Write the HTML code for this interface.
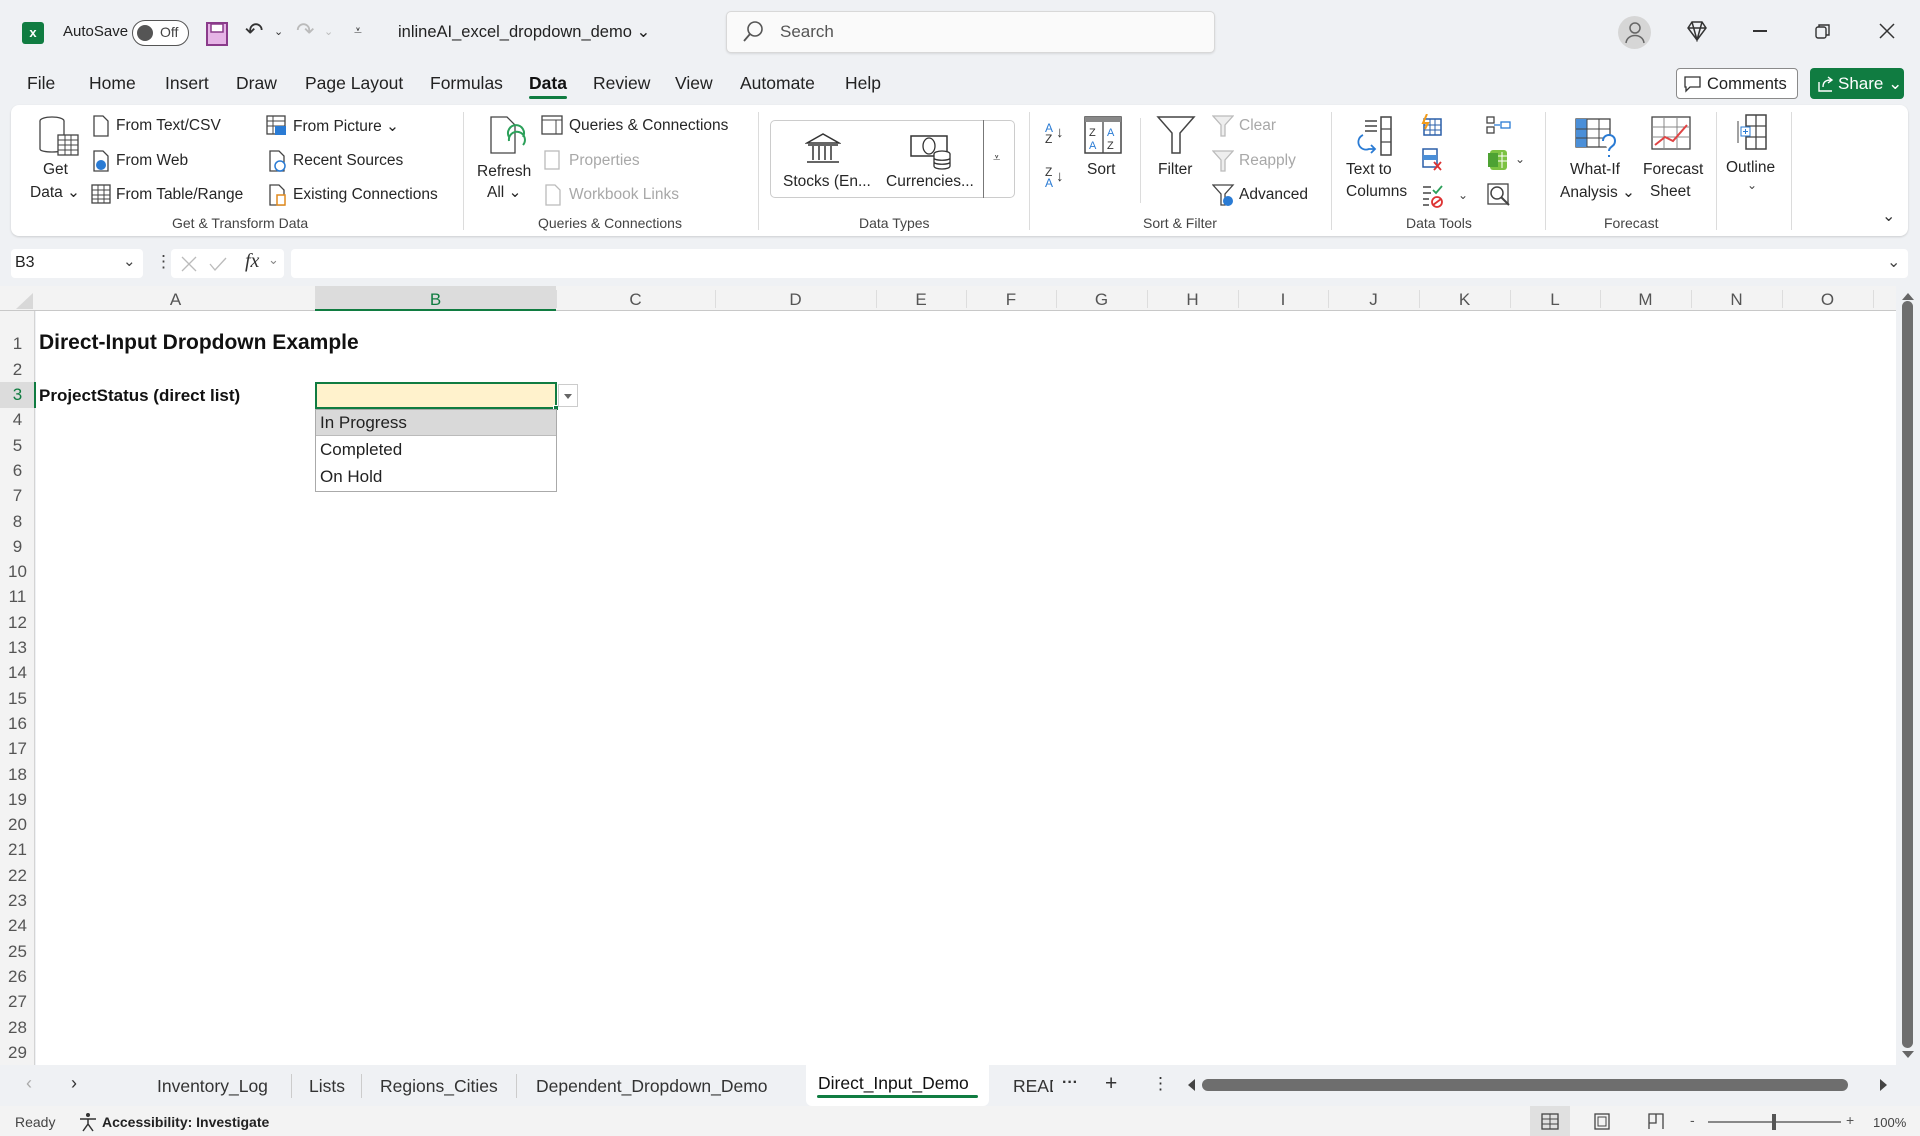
<!DOCTYPE html>
<html><head><meta charset="utf-8">
<style>
*{margin:0;padding:0;box-sizing:border-box}
body{width:1920px;height:1136px;overflow:hidden;background:#eff1f4;font-family:"Liberation Sans",sans-serif;color:#222;position:relative}
.a{position:absolute;white-space:nowrap}
.t{font-size:15.5px;color:#262626}
.g{color:#a8a8a8}
.lbl{font-size:14px;color:#444}
.sep{position:absolute;width:1px;background:#dcdcdc;top:112px;height:118px}
.menu{font-size:17.5px;top:73px;color:#222}
.ch{font-size:17px;color:#555;top:290px;text-align:center}
.rn{font-size:17px;color:#555;left:0;width:35px;text-align:center}
svg{position:absolute}
</style></head><body>

<!-- title bar -->
<div class="a" style="left:22px;top:22px;width:22px;height:22px;background:#107c41;border-radius:3px;color:#fff;font-size:13px;font-weight:bold;text-align:center;line-height:22px">x</div>
<div class="a" style="left:63px;top:23px;font-size:15px">AutoSave</div>
<div class="a" style="left:132px;top:20px;width:57px;height:26px;border:1.5px solid #555;border-radius:13px;background:#fff"></div>
<div class="a" style="left:137px;top:25px;width:16px;height:16px;border-radius:8px;background:#555"></div>
<div class="a" style="left:160px;top:24px;font-size:14px;color:#444">Off</div>
<svg style="left:206px;top:22px" width="22" height="24"><rect x="1" y="1" width="20" height="22" fill="#e6b4e6" stroke="#8a3b8a" stroke-width="2"/><rect x="5" y="2" width="12" height="8" fill="#fff" stroke="#8a3b8a" stroke-width="1.5"/></svg>
<div class="a" style="left:245px;top:18px;font-size:22px;color:#333">↶</div>
<div class="a" style="left:274px;top:25px;font-size:11px;color:#333">⌄</div>
<div class="a" style="left:296px;top:18px;font-size:22px;color:#bbb">↷</div>
<div class="a" style="left:324px;top:25px;font-size:11px;color:#bbb">⌄</div>
<div class="a" style="left:354px;top:22px;font-size:14px;color:#333">⩡</div>
<div class="a" style="left:398px;top:22px;font-size:16.5px;color:#222">inlineAI_excel_dropdown_demo ⌄</div>
<div class="a" style="left:726px;top:11px;width:489px;height:42px;background:#fafafa;border:1px solid #d8d8d8;border-radius:5px;box-shadow:0 1px 2px rgba(0,0,0,.1)"></div>
<svg style="left:742px;top:20px" width="22" height="24"><circle cx="13" cy="9" r="7" fill="none" stroke="#555" stroke-width="1.6"/><path d="M8 14 L2 21" stroke="#555" stroke-width="1.8"/></svg>
<div class="a" style="left:780px;top:22px;font-size:17px;color:#555">Search</div>
<div class="a" style="left:1618px;top:16px;width:33px;height:33px;border-radius:50%;background:#d6d6d6"></div>
<svg style="left:1624px;top:20px" width="22" height="26"><circle cx="11" cy="8" r="5" fill="none" stroke="#666" stroke-width="1.5"/><path d="M2 23 C3 13 19 13 20 23" fill="none" stroke="#666" stroke-width="1.5"/></svg>
<svg style="left:1686px;top:20px" width="22" height="22"><path d="M2 8 L6 2 H16 L20 8 L11 20 Z M2 8 H20 M6 2 L11 20 L16 2" fill="none" stroke="#333" stroke-width="1.5"/></svg>
<div class="a" style="left:1753px;top:30px;width:14px;height:1.5px;background:#333"></div>
<svg style="left:1815px;top:23px" width="16" height="16"><rect x="1" y="4" width="10" height="11" rx="2" fill="none" stroke="#333" stroke-width="1.4"/><path d="M4 4 V2 H14 V12 H11" fill="none" stroke="#333" stroke-width="1.4"/></svg>
<svg style="left:1879px;top:23px" width="16" height="16"><path d="M1 1 L15 15 M15 1 L1 15" stroke="#333" stroke-width="1.5"/></svg>

<!-- menu -->
<div class="a menu" style="left:27px">File</div>
<div class="a menu" style="left:89px">Home</div>
<div class="a menu" style="left:165px">Insert</div>
<div class="a menu" style="left:236px">Draw</div>
<div class="a menu" style="left:305px">Page Layout</div>
<div class="a menu" style="left:430px">Formulas</div>
<div class="a menu" style="left:529px;font-weight:bold;color:#111">Data</div>
<div class="a" style="left:529px;top:96px;width:38px;height:3px;background:#107c41;border-radius:2px"></div>
<div class="a menu" style="left:593px">Review</div>
<div class="a menu" style="left:675px">View</div>
<div class="a menu" style="left:740px">Automate</div>
<div class="a menu" style="left:845px">Help</div>
<div class="a" style="left:1676px;top:68px;width:122px;height:31px;border:1px solid #8a8a8a;border-radius:4px;background:#fff;font-size:16.5px;padding:6px 0 0 30px">Comments</div>
<svg style="left:1684px;top:76px" width="18" height="18"><path d="M1 1 H16 V11 H6 L2 15 V11 H1 Z" fill="none" stroke="#333" stroke-width="1.3"/></svg>
<div class="a" style="left:1810px;top:68px;width:94px;height:31px;border-radius:4px;background:#107c41;color:#fff;font-size:17px;padding:6px 0 0 28px">Share ⌄</div>
<svg style="left:1817px;top:75px" width="18" height="18"><path d="M2 7 V16 H15 M6 12 C6 6 10 5 14 5 M11 2 L15 5 L11 8" fill="none" stroke="#fff" stroke-width="1.4"/></svg>

<!-- ribbon -->
<div class="a" style="left:11px;top:105px;width:1897px;height:131px;background:#fff;border-radius:8px;box-shadow:0 1px 2px rgba(0,0,0,.15)"></div>
<svg style="left:38px;top:115px" width="42" height="42"><ellipse cx="14" cy="6" rx="12" ry="4" fill="#fff" stroke="#444" stroke-width="1.3"/><path d="M2 6 V34 C2 38 26 38 26 34 V6" fill="#fff" stroke="#444" stroke-width="1.3"/><rect x="20" y="20" width="20" height="20" fill="#fff" stroke="#444" stroke-width="1.3"/><path d="M20 25 H40 M20 30 H40 M20 35 H40 M27 20 V40 M33 20 V40" stroke="#444"/></svg>
<div class="a t" style="left:43px;top:161px">Get</div>
<div class="a t" style="left:30px;top:183px">Data ⌄</div>
<svg style="left:92px;top:115px" width="18" height="22"><path d="M2 1 H11 L16 6 V21 H2 Z" fill="#fff" stroke="#444" stroke-width="1.3"/></svg>
<div class="a t" style="left:116px;top:117px">From Text/CSV</div>
<svg style="left:92px;top:150px" width="18" height="22"><path d="M2 1 H11 L16 6 V21 H2 Z" fill="#fff" stroke="#444" stroke-width="1.3"/><circle cx="9" cy="15" r="5" fill="#2a7bd4"/></svg>
<div class="a t" style="left:116px;top:152px">From Web</div>
<svg style="left:91px;top:184px" width="20" height="20"><rect x="1" y="1" width="18" height="18" fill="#fff" stroke="#444" stroke-width="1.3"/><path d="M1 6 H19 M1 11 H19 M1 15 H19 M7 1 V19 M13 1 V19" stroke="#444"/></svg>
<div class="a t" style="left:116px;top:186px">From Table/Range</div>
<svg style="left:266px;top:115px" width="22" height="22"><rect x="1" y="1" width="18" height="18" fill="#fff" stroke="#444" stroke-width="1.3"/><path d="M1 6 H19 M1 11 H19 M7 1 V19" stroke="#444"/><rect x="9" y="11" width="11" height="9" fill="#2a7bd4"/></svg>
<div class="a t" style="left:293px;top:117px">From Picture ⌄</div>
<svg style="left:268px;top:150px" width="20" height="22"><path d="M2 1 H11 L16 6 V21 H2 Z" fill="#fff" stroke="#444" stroke-width="1.3"/><circle cx="12" cy="16" r="5" fill="#fff" stroke="#2a7bd4" stroke-width="1.5"/></svg>
<div class="a t" style="left:293px;top:152px">Recent Sources</div>
<svg style="left:268px;top:184px" width="20" height="22"><path d="M2 1 H11 L16 6 V21 H2 Z" fill="#fff" stroke="#444" stroke-width="1.3"/><rect x="9" y="11" width="8" height="10" fill="#fff" stroke="#e08a1e" stroke-width="1.5"/></svg>
<div class="a t" style="left:293px;top:186px">Existing Connections</div>
<div class="a lbl" style="left:172px;top:215px">Get &amp; Transform Data</div>
<div class="sep" style="left:463px"></div>
<svg style="left:487px;top:115px" width="44" height="44"><path d="M4 2 H20 L28 10 V38 H4 Z" fill="#fff" stroke="#444" stroke-width="1.3"/><path d="M22 26 A8 8 0 1 1 36 30 M36 22 A8 8 0 1 0 22 22" fill="none" stroke="#2ca05a" stroke-width="2"/></svg>
<div class="a t" style="left:477px;top:163px">Refresh</div>
<div class="a t" style="left:487px;top:183px">All ⌄</div>
<svg style="left:541px;top:115px" width="22" height="20"><rect x="1" y="1" width="20" height="18" fill="#fff" stroke="#444" stroke-width="1.3"/><path d="M1 5 H21 M15 5 V19" stroke="#444"/></svg>
<div class="a t" style="left:569px;top:117px">Queries &amp; Connections</div>
<svg style="left:544px;top:150px" width="16" height="20"><rect x="1" y="1" width="14" height="18" fill="#fff" stroke="#bbb" stroke-width="1.3"/></svg>
<div class="a t g" style="left:569px;top:152px">Properties</div>
<svg style="left:544px;top:184px" width="18" height="22"><path d="M2 1 H11 L16 6 V21 H2 Z" fill="#fff" stroke="#bbb" stroke-width="1.3"/></svg>
<div class="a t g" style="left:569px;top:186px">Workbook Links</div>
<div class="a lbl" style="left:538px;top:215px">Queries &amp; Connections</div>
<div class="sep" style="left:758px"></div>
<div class="a" style="left:770px;top:120px;width:245px;height:78px;border:1px solid #ccc;border-radius:5px"></div>
<div class="a" style="left:983px;top:120px;width:1px;height:78px;background:#777"></div>
<div class="a" style="left:993px;top:150px;font-size:13px;color:#444">⩡</div>
<svg style="left:805px;top:132px" width="36" height="34"><path d="M2 11 L18 2 L34 11 Z" fill="#fff" stroke="#333" stroke-width="1.5"/><path d="M3 13 H33 M8 14 V28 M14 14 V28 M20 14 V28 M26 14 V28 M2 30 H34" stroke="#333" stroke-width="1.5"/></svg>
<div class="a t" style="left:783px;top:173px">Stocks (En...</div>
<svg style="left:910px;top:132px" width="42" height="38"><rect x="1" y="4" width="36" height="20" fill="#fff" stroke="#333" stroke-width="1.5"/><ellipse cx="19" cy="14" rx="6" ry="8" fill="none" stroke="#333" stroke-width="1.3"/><ellipse cx="32" cy="22" rx="8" ry="3" fill="#fff" stroke="#333" stroke-width="1.3"/><path d="M24 22 V34 C24 38 40 38 40 34 V22 M24 26 C24 29 40 29 40 26 M24 30 C24 33 40 33 40 30" fill="#fff" stroke="#333" stroke-width="1.3"/></svg>
<div class="a t" style="left:886px;top:173px">Currencies...</div>
<div class="a lbl" style="left:859px;top:215px">Data Types</div>
<div class="sep" style="left:1029px"></div>
<div class="a" style="left:1045px;top:123px;font-size:12px;line-height:11px;color:#2a7bd4">A<br><span style="color:#333">Z</span></div>
<div class="a" style="left:1056px;top:124px;font-size:15px;color:#333">↓</div>
<div class="a" style="left:1045px;top:167px;font-size:12px;line-height:11px;color:#333">Z<br><span style="color:#2a7bd4">A</span></div>
<div class="a" style="left:1056px;top:168px;font-size:15px;color:#333">↓</div>
<svg style="left:1084px;top:116px" width="38" height="38"><rect x="1" y="1" width="36" height="36" fill="#fff" stroke="#444" stroke-width="1.5"/><rect x="1" y="1" width="36" height="5" fill="#888"/><path d="M19 6 V37" stroke="#444" stroke-width="1.3"/><text x="5" y="20" font-size="11" fill="#333" font-family="Liberation Sans">Z</text><text x="5" y="33" font-size="11" fill="#2a7bd4" font-family="Liberation Sans">A</text><text x="23" y="20" font-size="11" fill="#2a7bd4" font-family="Liberation Sans">A</text><text x="23" y="33" font-size="11" fill="#333" font-family="Liberation Sans">Z</text></svg>
<div class="a t" style="left:1087px;top:161px">Sort</div>
<div class="sep" style="left:1140px;top:118px;height:85px"></div>
<svg style="left:1156px;top:115px" width="40" height="40"><path d="M2 2 H38 L24 18 V38 H16 V18 Z" fill="#fff" stroke="#444" stroke-width="1.5"/></svg>
<div class="a t" style="left:1158px;top:161px">Filter</div>
<svg style="left:1212px;top:115px" width="22" height="22"><path d="M1 1 H21 L13 10 V21 H9 V10 Z" fill="#eee" stroke="#bbb" stroke-width="1.3"/></svg>
<div class="a t g" style="left:1239px;top:117px">Clear</div>
<svg style="left:1212px;top:150px" width="22" height="22"><path d="M1 1 H21 L13 10 V21 H9 V10 Z" fill="#eee" stroke="#bbb" stroke-width="1.3"/></svg>
<div class="a t g" style="left:1239px;top:152px">Reapply</div>
<svg style="left:1212px;top:184px" width="24" height="24"><path d="M1 1 H21 L13 10 V21 H9 V10 Z" fill="#fff" stroke="#444" stroke-width="1.3"/><circle cx="16" cy="17" r="5" fill="#2a7bd4"/></svg>
<div class="a t" style="left:1239px;top:186px">Advanced</div>
<div class="a lbl" style="left:1143px;top:215px">Sort &amp; Filter</div>
<div class="sep" style="left:1331px"></div>
<svg style="left:1355px;top:115px" width="44" height="46"><path d="M10 6 H22 M10 11 H22 M10 16 H22" stroke="#444" stroke-width="1.5"/><rect x="26" y="2" width="10" height="38" fill="#fff" stroke="#444" stroke-width="1.5"/><path d="M26 14 H36 M26 27 H36" stroke="#444" stroke-width="1.3"/><path d="M8 20 A7 7 0 0 0 14 34 L20 34 M16 30 L20 34 L16 38" fill="none" stroke="#2a7bd4" stroke-width="1.8"/></svg>
<div class="a t" style="left:1346px;top:161px">Text to</div>
<div class="a t" style="left:1346px;top:183px">Columns</div>
<svg style="left:1421px;top:114px" width="22" height="22"><rect x="3" y="5" width="17" height="16" fill="#fff" stroke="#2a5fa8" stroke-width="1.5"/><path d="M3 11 H20 M3 16 H20 M9 5 V21 M14 5 V21" stroke="#2a5fa8"/><path d="M6 0 L2 9 H7 L4 15" stroke="#f29b1a" stroke-width="2" fill="none"/></svg>
<svg style="left:1421px;top:148px" width="22" height="24"><rect x="2" y="1" width="14" height="18" fill="#fff" stroke="#2a5fa8" stroke-width="1.5"/><rect x="2" y="7" width="14" height="5" fill="#4b8fd8"/><path d="M13 14 L20 22 M20 14 L13 22" stroke="#d33" stroke-width="1.8"/></svg>
<svg style="left:1421px;top:184px" width="24" height="24"><path d="M2 3 H10 M2 9 H10 M2 15 H8 M2 21 H8" stroke="#444" stroke-width="1.5"/><path d="M12 6 L15 9 L21 2" stroke="#2ca05a" stroke-width="1.8" fill="none"/><circle cx="16" cy="18" r="5" fill="none" stroke="#d33" stroke-width="1.8"/><path d="M12 21 L20 15" stroke="#d33" stroke-width="1.8"/></svg>
<div class="a" style="left:1458px;top:188px;font-size:12px;color:#444">⌄</div>
<svg style="left:1486px;top:115px" width="26" height="20"><rect x="1" y="2" width="7" height="6" fill="#fff" stroke="#444" stroke-width="1.3"/><rect x="1" y="12" width="7" height="6" fill="#fff" stroke="#444" stroke-width="1.3"/><rect x="15" y="7" width="9" height="6" fill="#fff" stroke="#2a7bd4" stroke-width="1.3"/><path d="M8 10 H14" stroke="#2a7bd4" stroke-width="1.3"/></svg>
<svg style="left:1487px;top:148px" width="22" height="24"><rect x="3" y="2" width="17" height="20" rx="3" fill="#7cc242"/><rect x="1" y="5" width="10" height="14" fill="#4da233"/><path d="M11 8 H20 M11 13 H20 M15 4 V20" stroke="#fff"/></svg>
<div class="a" style="left:1515px;top:152px;font-size:12px;color:#444">⌄</div>
<svg style="left:1487px;top:183px" width="24" height="24"><rect x="1" y="1" width="20" height="20" fill="#fff" stroke="#444" stroke-width="1.3"/><circle cx="10" cy="10" r="6" fill="none" stroke="#444" stroke-width="1.5"/><path d="M14 14 L22 22" stroke="#444" stroke-width="2"/></svg>
<div class="a lbl" style="left:1406px;top:215px">Data Tools</div>
<div class="sep" style="left:1545px"></div>
<svg style="left:1575px;top:117px" width="44" height="42"><rect x="1" y="2" width="34" height="28" fill="#fff" stroke="#444" stroke-width="1.3"/><rect x="1" y="2" width="11" height="28" fill="#4b8fd8"/><path d="M1 12 H35 M1 21 H35 M12 2 V30 M24 2 V30" stroke="#444"/><path d="M28 24 C28 16 40 16 40 24 C40 30 34 29 34 34 M34 38 V40" fill="#fff" stroke="#2a7bd4" stroke-width="2"/></svg>
<div class="a t" style="left:1570px;top:161px">What-If</div>
<div class="a t" style="left:1560px;top:183px">Analysis ⌄</div>
<svg style="left:1651px;top:115px" width="42" height="42"><rect x="1" y="2" width="38" height="32" fill="#fff" stroke="#444" stroke-width="1.3"/><path d="M1 12 H39 M1 22 H39 M13 2 V34 M26 2 V34" stroke="#888"/><path d="M4 30 L14 22 L22 26 L36 10" fill="none" stroke="#e04444" stroke-width="2"/></svg>
<div class="a t" style="left:1643px;top:161px">Forecast</div>
<div class="a t" style="left:1650px;top:183px">Sheet</div>
<div class="a lbl" style="left:1604px;top:215px">Forecast</div>
<div class="sep" style="left:1716px"></div>
<svg style="left:1736px;top:113px" width="34" height="38"><rect x="10" y="2" width="20" height="34" fill="#fff" stroke="#444" stroke-width="1.5"/><path d="M10 13 H30 M10 24 H30 M20 2 V36" stroke="#444" stroke-width="1.3"/><path d="M2 8 V30" stroke="#444"/><rect x="5" y="14" width="9" height="9" fill="#fff" stroke="#2a7bd4"/><path d="M9.5 16 V21 M7 18.5 H12" stroke="#2a7bd4"/></svg>
<div class="a t" style="left:1726px;top:159px">Outline</div>
<div class="a" style="left:1747px;top:178px;font-size:12px;color:#444">⌄</div>
<div class="sep" style="left:1791px"></div>
<div class="a" style="left:1882px;top:206px;font-size:16px;color:#333">⌄</div>

<!-- formula bar -->
<div class="a" style="left:11px;top:249px;width:132px;height:29px;background:#fff;border-radius:4px;font-size:16px;padding:5px 0 0 4px">B3</div>
<div class="a" style="left:123px;top:252px;font-size:15px;color:#444">⌄</div>
<div class="a" style="left:155px;top:252px;font-size:17px;color:#444">⋮</div>
<div class="a" style="left:171px;top:249px;width:113px;height:29px;background:#fff;border-radius:4px"></div>
<svg style="left:180px;top:256px" width="18" height="16"><path d="M2 1 L16 15 M16 1 L2 15" stroke="#bbb" stroke-width="1.3"/></svg>
<svg style="left:208px;top:256px" width="20" height="16"><path d="M2 8 L7 14 L18 2" fill="none" stroke="#bbb" stroke-width="1.3"/></svg>
<div class="a" style="left:245px;top:250px;font-size:20px;font-style:italic;font-family:'Liberation Serif',serif;color:#333">fx</div>
<div class="a" style="left:268px;top:252px;font-size:13px;color:#888">⌄</div>
<div class="a" style="left:291px;top:249px;width:1617px;height:29px;background:#fff;border-radius:4px"></div>
<div class="a" style="left:1887px;top:252px;font-size:16px;color:#444">⌄</div>

<!-- grid area -->
<div class="a" style="left:0;top:286px;width:1896px;height:25px;background:#f3f3f3;border-bottom:1px solid #c8c8c8"></div>
<div class="a" style="left:0;top:311px;width:35px;height:754px;background:#f3f3f3;border-right:1px solid #d4d4d4"></div>
<div class="a" style="left:36px;top:311px;width:1860px;height:754px;background:#fff"></div>
<svg style="left:12px;top:292px" width="22" height="18"><path d="M21 1 V17 H4 Z" fill="#d8d8d8"/></svg>
<div class="a" style="left:315px;top:286px;width:241px;height:25px;background:#dcdcdc;border-bottom:2px solid #107c41"></div>
<div class="a ch" style="left:36px;width:279px">A</div>
<div class="a ch" style="left:315px;width:241px;color:#107c41">B</div>
<div class="a ch" style="left:556px;width:159px">C</div>
<div class="a ch" style="left:715px;width:161px">D</div>
<div class="a ch" style="left:876px;width:90px">E</div>
<div class="a ch" style="left:966px;width:90px">F</div>
<div class="a ch" style="left:1056px;width:91px">G</div>
<div class="a ch" style="left:1147px;width:91px">H</div>
<div class="a ch" style="left:1238px;width:90px">I</div>
<div class="a ch" style="left:1328px;width:91px">J</div>
<div class="a ch" style="left:1419px;width:91px">K</div>
<div class="a ch" style="left:1510px;width:90px">L</div>
<div class="a ch" style="left:1600px;width:91px">M</div>
<div class="a ch" style="left:1691px;width:91px">N</div>
<div class="a ch" style="left:1782px;width:91px">O</div>
<div class="a" style="left:315px;top:290px;width:1px;height:18px;background:#ddd"></div>
<div class="a" style="left:556px;top:290px;width:1px;height:18px;background:#ddd"></div>
<div class="a" style="left:715px;top:290px;width:1px;height:18px;background:#ddd"></div>
<div class="a" style="left:876px;top:290px;width:1px;height:18px;background:#ddd"></div>
<div class="a" style="left:966px;top:290px;width:1px;height:18px;background:#ddd"></div>
<div class="a" style="left:1056px;top:290px;width:1px;height:18px;background:#ddd"></div>
<div class="a" style="left:1147px;top:290px;width:1px;height:18px;background:#ddd"></div>
<div class="a" style="left:1238px;top:290px;width:1px;height:18px;background:#ddd"></div>
<div class="a" style="left:1328px;top:290px;width:1px;height:18px;background:#ddd"></div>
<div class="a" style="left:1419px;top:290px;width:1px;height:18px;background:#ddd"></div>
<div class="a" style="left:1510px;top:290px;width:1px;height:18px;background:#ddd"></div>
<div class="a" style="left:1600px;top:290px;width:1px;height:18px;background:#ddd"></div>
<div class="a" style="left:1691px;top:290px;width:1px;height:18px;background:#ddd"></div>
<div class="a" style="left:1782px;top:290px;width:1px;height:18px;background:#ddd"></div>
<div class="a" style="left:1873px;top:290px;width:1px;height:18px;background:#ddd"></div>
<div class="a" style="left:0;top:382px;width:36px;height:26px;background:#dcdcdc;border-right:2px solid #107c41"></div>
<div class="a rn" style="top:334px">1</div>
<div class="a rn" style="top:360px">2</div>
<div class="a rn" style="top:385px;color:#107c41">3</div>
<div class="a rn" style="top:410px">4</div>
<div class="a rn" style="top:436px">5</div>
<div class="a rn" style="top:461px">6</div>
<div class="a rn" style="top:486px">7</div>
<div class="a rn" style="top:512px">8</div>
<div class="a rn" style="top:537px">9</div>
<div class="a rn" style="top:562px">10</div>
<div class="a rn" style="top:587px">11</div>
<div class="a rn" style="top:613px">12</div>
<div class="a rn" style="top:638px">13</div>
<div class="a rn" style="top:663px">14</div>
<div class="a rn" style="top:689px">15</div>
<div class="a rn" style="top:714px">16</div>
<div class="a rn" style="top:739px">17</div>
<div class="a rn" style="top:765px">18</div>
<div class="a rn" style="top:790px">19</div>
<div class="a rn" style="top:815px">20</div>
<div class="a rn" style="top:840px">21</div>
<div class="a rn" style="top:866px">22</div>
<div class="a rn" style="top:891px">23</div>
<div class="a rn" style="top:916px">24</div>
<div class="a rn" style="top:942px">25</div>
<div class="a rn" style="top:967px">26</div>
<div class="a rn" style="top:992px">27</div>
<div class="a rn" style="top:1018px">28</div>
<div class="a rn" style="top:1043px">29</div>

<!-- cells -->
<div class="a" style="left:39px;top:331px;font-size:21px;font-weight:bold;color:#111">Direct-Input Dropdown Example</div>
<div class="a" style="left:39px;top:386px;font-size:17px;font-weight:bold;color:#111">ProjectStatus (direct list)</div>
<div class="a" style="left:315px;top:382px;width:242px;height:27px;background:#fff2cc;border:2px solid #107c41"></div>
<div class="a" style="left:553px;top:405px;width:6px;height:6px;background:#107c41;border:1px solid #fff"></div>
<div class="a" style="left:558px;top:384px;width:20px;height:23px;background:#fff;border:1px solid #ccc"></div>
<svg style="left:563px;top:392px" width="10" height="8"><path d="M1 2 H9 L5 7 Z" fill="#666"/></svg>
<div class="a" style="left:315px;top:409px;width:242px;height:83px;background:#fff;border:1px solid #aaa"></div>
<div class="a" style="left:316px;top:410px;width:240px;height:26px;background:#d9d9d9;border-bottom:1px solid #bbb"></div>
<div class="a" style="left:320px;top:413px;font-size:17px;color:#222">In Progress</div>
<div class="a" style="left:320px;top:440px;font-size:17px;color:#222">Completed</div>
<div class="a" style="left:320px;top:467px;font-size:17px;color:#222">On Hold</div>

<!-- vertical scrollbar -->
<svg style="left:1901px;top:291px" width="14" height="10"><path d="M1 9 L7 2 L13 9 Z" fill="#666"/></svg>
<div class="a" style="left:1902px;top:301px;width:11px;height:747px;background:#6e6e6e;border-radius:6px"></div>
<svg style="left:1901px;top:1050px" width="14" height="10"><path d="M1 1 L7 8 L13 1 Z" fill="#666"/></svg>

<!-- sheet tabs -->
<div class="a" style="left:26px;top:1073px;font-size:18px;color:#aaa">‹</div>
<div class="a" style="left:71px;top:1073px;font-size:18px;color:#333">›</div>
<div class="a" style="left:157px;top:1076px;font-size:17.5px;color:#333">Inventory_Log</div>
<div class="a" style="left:291px;top:1074px;width:1px;height:24px;background:#ccc"></div>
<div class="a" style="left:309px;top:1076px;font-size:17.5px;color:#333">Lists</div>
<div class="a" style="left:361px;top:1074px;width:1px;height:24px;background:#ccc"></div>
<div class="a" style="left:380px;top:1076px;font-size:17.5px;color:#333">Regions_Cities</div>
<div class="a" style="left:516px;top:1074px;width:1px;height:24px;background:#ccc"></div>
<div class="a" style="left:536px;top:1076px;font-size:17.5px;color:#333">Dependent_Dropdown_Demo</div>
<div class="a" style="left:806px;top:1065px;width:183px;height:41px;background:#fff;border-radius:0 0 6px 6px"></div>
<div class="a" style="left:818px;top:1073px;font-size:17.5px;color:#111">Direct_Input_Demo</div>
<div class="a" style="left:817px;top:1095px;width:161px;height:3px;background:#107c41;border-radius:2px"></div>
<div class="a" style="left:1013px;top:1076px;font-size:17.5px;color:#333;width:40px;overflow:hidden">READ</div>
<div class="a" style="left:1062px;top:1074px;font-size:16px;color:#333;font-weight:bold">···</div>
<div class="a" style="left:1105px;top:1072px;font-size:21px;color:#333">+</div>
<div class="a" style="left:1152px;top:1074px;font-size:17px;color:#333">⋮</div>
<svg style="left:1186px;top:1078px" width="10" height="14"><path d="M9 1 L2 7 L9 13 Z" fill="#444"/></svg>
<div class="a" style="left:1202px;top:1079px;width:646px;height:12px;background:#6e6e6e;border-radius:6px"></div>
<svg style="left:1879px;top:1078px" width="10" height="14"><path d="M1 1 L8 7 L1 13 Z" fill="#444"/></svg>

<!-- status bar -->
<div class="a" style="left:0;top:1106px;width:1920px;height:30px;background:#f3f3f3"></div>
<div class="a" style="left:15px;top:1114px;font-size:14px;color:#444">Ready</div>
<svg style="left:78px;top:1112px" width="20" height="20"><circle cx="10" cy="3" r="2" fill="#333"/><path d="M2 7 H18 M10 7 V12 L5 19 M10 12 L15 19" stroke="#333" stroke-width="1.5" fill="none"/></svg>
<div class="a" style="left:102px;top:1114px;font-size:14px;font-weight:bold;color:#222">Accessibility: Investigate</div>
<div class="a" style="left:1530px;top:1106px;width:40px;height:30px;background:#e0e0e0"></div>
<svg style="left:1541px;top:1113px" width="18" height="17"><rect x="1" y="1" width="16" height="15" fill="none" stroke="#444" stroke-width="1.3"/><path d="M1 6 H17 M1 11 H17 M9 1 V16" stroke="#444"/></svg>
<svg style="left:1594px;top:1113px" width="16" height="17"><rect x="1" y="1" width="14" height="15" fill="none" stroke="#444" stroke-width="1.3"/><rect x="4" y="4" width="8" height="9" fill="none" stroke="#444"/></svg>
<svg style="left:1648px;top:1113px" width="16" height="17"><path d="M1 16 V1 H15 V16 M8 1 V10 H1" fill="none" stroke="#444" stroke-width="1.3"/></svg>
<div class="a" style="left:1690px;top:1112px;font-size:14px;color:#555">-</div>
<div class="a" style="left:1708px;top:1121px;width:133px;height:2px;background:#888"></div>
<div class="a" style="left:1772px;top:1114px;width:4px;height:16px;background:#555"></div>
<div class="a" style="left:1846px;top:1112px;font-size:14px;color:#555">+</div>
<div class="a" style="left:1873px;top:1115px;font-size:13px;color:#444">100%</div>
</body></html>
